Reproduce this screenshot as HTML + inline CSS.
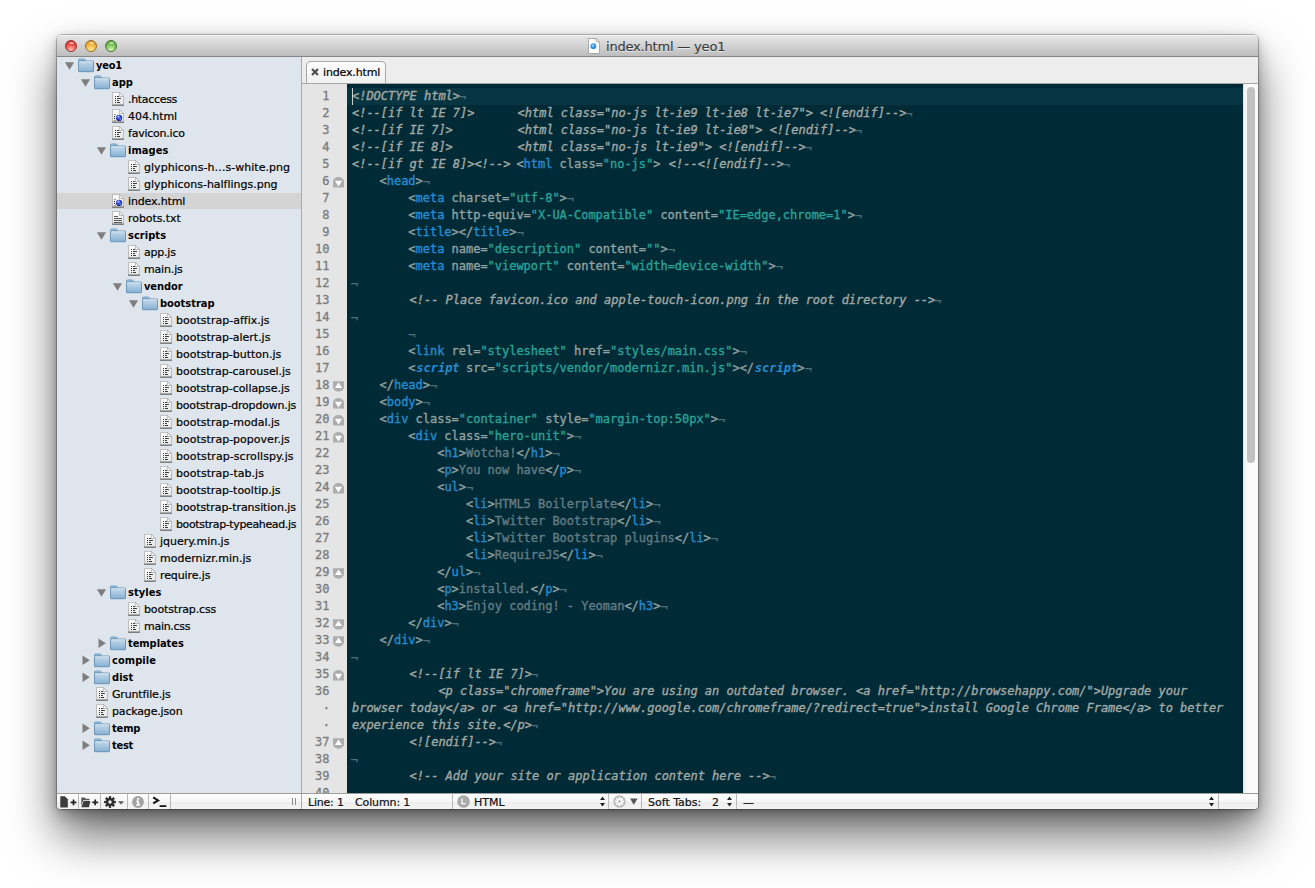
<!DOCTYPE html>
<html lang="en">
<head>
<meta charset="utf-8">
<title>index.html — yeo1</title>
<style>
html,body{margin:0;padding:0;background:#fff;}
body{width:1315px;height:888px;position:relative;overflow:hidden;font-family:"DejaVu Sans","Liberation Sans",sans-serif;font-size:11px;color:#000;}
.win{position:absolute;left:57px;top:35px;width:1201px;height:774px;border-radius:5px 5px 4px 4px;background:#ededed;
  box-shadow:0 0 0 1px rgba(0,0,0,.22),0 1px 4px rgba(0,0,0,.18),0 6px 16px rgba(0,0,0,.25),0 27px 48px rgba(0,0,0,.57);}
.clip{position:absolute;left:0;top:0;width:1201px;height:774px;border-radius:4px;overflow:hidden;}
.abs{position:absolute;}
/* title bar */
.title{position:absolute;left:0;top:0;width:1201px;height:22px;background:linear-gradient(#e9e9e9,#dcdcdc 30%,#bdbdbd 100%);border-bottom:1px solid #868686;box-shadow:inset 0 2px 0 -0px #f4f4f4;}
.tl{position:absolute;top:6px;width:12px;height:12px;border-radius:50%;box-sizing:border-box;}
.tl.r{left:8px;background:radial-gradient(circle at 50% 90%,#ffc8c0 0,#f4544c 50%,#d0302c 85%);border:1px solid #9a2f2c;}
.tl.y{left:28px;background:radial-gradient(circle at 50% 90%,#fff0a0 0,#f5b843 50%,#d9922a 85%);border:1px solid #a06c22;}
.tl.g{left:48px;background:radial-gradient(circle at 50% 90%,#e0f6c0 0,#80c65a 50%,#559a3a 85%);border:1px solid #487a34;}
.tl:after{content:"";position:absolute;left:2.5px;top:0.6px;width:5px;height:2.2px;border-radius:50%;background:rgba(255,255,255,.55);}
.ttext{-webkit-text-stroke:0.15px;position:absolute;left:549px;top:4px;letter-spacing:-0.19px;font-size:13px;line-height:17px;color:#3a3a3a;white-space:pre;text-shadow:0 1px 0 rgba(255,255,255,.6);}
/* sidebar */
.side{position:absolute;left:0;top:23px;width:244px;height:736px;background:#dfe5ec;overflow:hidden;}
.sdiv{position:absolute;left:244px;top:23px;width:1px;height:752px;background:#a9a9a9;}
.row{position:absolute;left:0;width:244px;height:17px;}
.row.sel{background:#d4d4d4;height:16px;}
.row .nm{position:absolute;top:0;line-height:17px;white-space:pre;font-size:11px;color:#000;-webkit-text-stroke:0.2px;}
.row .nm.b{font-weight:bold;-webkit-text-stroke:0;font-family:"DejaVu Sans Condensed","DejaVu Sans","Liberation Sans",sans-serif;}
.row svg{position:absolute;}
.tri path{fill:#7e7e7e;}
/* tab bar */
.tabbar{position:absolute;left:245px;top:23px;width:956px;height:26px;background:#ededed;border-bottom:1px solid #a6a6a6;}
.tab{position:absolute;left:4px;top:4px;width:80px;height:22px;box-sizing:border-box;border:1px solid #a8a8a8;border-bottom:none;border-radius:5px 5px 0 0;background:linear-gradient(#fdfdfd,#f1f1f1);}
.tab .x{position:absolute;left:4px;top:5.5px;}
.tab .tt{-webkit-text-stroke:0.2px;position:absolute;left:16px;top:2px;line-height:17px;font-size:11px;white-space:pre;letter-spacing:-0.15px;}
/* editor */
.gutter{position:absolute;left:245px;top:50px;width:45px;height:709px;background:#e5e5e5;overflow:hidden;}
.ln{position:absolute;right:17.5px;height:17px;line-height:17px;font-family:"DejaVu Sans Mono","Liberation Mono",monospace;font-size:12px;color:#7c7c7c;-webkit-text-stroke:0.3px;text-align:right;white-space:pre;}
.ln.dot{right:17px;}
.fold{position:absolute;left:31px;}
.ed{position:absolute;left:290px;top:50px;width:896px;height:709px;background:#002b36;overflow:hidden;}
.cur{position:absolute;left:0;top:4px;width:896px;height:17px;background:#073642;}
.caret{position:absolute;left:5px;top:4px;width:1px;height:17px;background:#c8d0d0;}
.cl{position:absolute;left:3.75px;height:17px;line-height:17px;white-space:pre;font-family:"DejaVu Sans Mono","Liberation Mono",monospace;font-size:12px;letter-spacing:-0.024px;color:#93a1a1;-webkit-text-stroke:0.35px;}
.c{font-style:italic;color:#a3a9a6;position:relative;left:1.25px;}
.p{color:#93a1a1;}
.t{color:#268bd2;}
.ti{color:#268bd2;font-style:italic;font-weight:bold;-webkit-text-stroke:0;position:relative;left:0.8px;}
.a{color:#93a1a1;}
.s{color:#2aa198;}
.x{color:#657b83;}
.i{color:#4a707c;position:relative;top:1px;}
/* scrollbar */
.sb{position:absolute;left:1186px;top:50px;width:15px;height:709px;background:linear-gradient(90deg,#f0f0f0,#fbfbfb 40%,#fafafa);box-shadow:inset 1px 0 0 #e4e4e4;}
.thumb{position:absolute;left:4px;top:3px;width:8px;height:376px;border-radius:4px;background:#c1c1c1;}
/* status */
.status{position:absolute;left:0;top:759px;width:1201px;height:16px;background:linear-gradient(#ffffff,#f6f6f6 50%,#ececec 51%,#f4f4f4);border-top:1px solid #9d9d9d;box-sizing:border-box;}
.sep{position:absolute;top:0;width:1px;height:15px;background:#b9b9b9;}
.st{-webkit-text-stroke:0.2px;position:absolute;top:0px;line-height:17px;font-size:11px;white-space:pre;color:#111;}
.status svg{position:absolute;}
</style>
</head>
<body>
<svg width="0" height="0" style="position:absolute">
  <defs>
    <linearGradient id="fg" x1="0" y1="0" x2="0" y2="1"><stop offset="0" stop-color="#c6dbeb"/><stop offset="1" stop-color="#86b0d2"/></linearGradient>
    <linearGradient id="pg" x1="0" y1="0" x2="0" y2="1"><stop offset="0" stop-color="#ffffff"/><stop offset="1" stop-color="#e6e6e6"/></linearGradient>
    <radialGradient id="gl" cx="0.4" cy="0.35" r="0.7"><stop offset="0" stop-color="#7f9cff"/><stop offset="0.5" stop-color="#2a3fd0"/><stop offset="1" stop-color="#101a80"/></radialGradient>
    <symbol id="folder" viewBox="0 0 16 15">
      <path d="M0.5 2 Q0.5 0.9 1.6 0.9 L6 0.9 Q6.9 0.9 7.2 1.9 L7.5 3 L0.5 3 Z" fill="#9dc0dc" stroke="#6f9cbd" stroke-width="0.8"/>
      <rect x="0.5" y="3" width="15" height="10.7" rx="0.6" fill="url(#fg)" stroke="#6290b4" stroke-width="0.9"/>
      <path d="M1.2 3.8 H14.8" stroke="#e3eef6" stroke-width="0.8"/>
    </symbol>
    <symbol id="page" viewBox="0 0 12 15">
      <path d="M0.5 0.4 L7.4 0.4 L11.5 4.5 L11.5 13 L0.5 13 Z" fill="url(#pg)" stroke="#b0b0b0" stroke-width="0.8"/>
      <path d="M0.1 13.2 H11.9" stroke="#5a5a5a" stroke-width="1"/>
      <path d="M7.4 0.4 L7.4 4.5 L11.5 4.5 Z" fill="#f6f6f6" stroke="#a4a4a4" stroke-width="0.7"/>
    </symbol>
    <symbol id="file" viewBox="0 0 12 15">
      <use href="#page"/>
      <g fill="#3c3c3c">
        <rect x="3" y="4" width="1" height="1"/><rect x="5" y="4" width="2" height="1"/>
        <rect x="3" y="6" width="1" height="1"/><rect x="5" y="6" width="4" height="1"/>
        <rect x="3" y="8" width="1" height="1"/><rect x="5" y="8" width="2" height="1"/>
        <rect x="3" y="10" width="1" height="1"/><rect x="5" y="10" width="3" height="1"/>
      </g>
    </symbol>
    <symbol id="tfile" viewBox="0 0 12 15">
      <use href="#page"/>
      <g fill="#5a5a5a">
        <rect x="2" y="5" width="4" height="1"/>
        <rect x="2" y="7" width="8" height="1"/>
        <rect x="2" y="9" width="8" height="1"/>
        <rect x="2" y="11" width="8" height="1"/>
      </g>
    </symbol>
    <symbol id="hfile" viewBox="0 0 12 15">
      <use href="#page"/>
      <rect x="2" y="5" width="2" height="1" fill="#999"/><rect x="2" y="11" width="2" height="1" fill="#999"/>
      <rect x="2" y="7" width="1" height="1" fill="#222"/><rect x="2" y="9" width="1" height="1" fill="#222"/>
      <circle cx="7.1" cy="8.9" r="3.1" fill="url(#gl)"/>
      <path d="M5.6 7.4 q1 -1 2 -0.2 q-0.4 1.1 -1.6 1.3 Z M7.6 9.6 q1 -0.6 1.6 0.2 q-0.6 1 -1.4 0.8 Z" fill="#c4d0ff" opacity=".9"/>
    </symbol>
    <symbol id="foldd" viewBox="0 0 11 11">
      <path d="M0 5.2 C0 -1.6 11 -1.6 11 5.2 L11 10.6 L0 10.6 Z" fill="#adadad"/>
      <path d="M1.9 3.8 L9.1 3.8 L5.5 9.4 Z" fill="#fff"/>
    </symbol>
    <symbol id="foldu" viewBox="0 0 11 11">
      <path d="M0 0.2 L11 0.2 L11 5.6 C11 12.4 0 12.4 0 5.6 Z" fill="#adadad"/>
      <path d="M1.9 7 L9.1 7 L5.5 1.4 Z" fill="#fff"/>
    </symbol>
  </defs>
</svg>

<div class="win">
 <div class="clip">
 <div class="inner" style="position:absolute;left:0;top:-1px;width:1201px;height:775px">
  <div class="title">
    <div class="tl r"></div><div class="tl y"></div><div class="tl g"></div>
    <svg class="abs" style="left:531px;top:4px" width="12" height="16" viewBox="0 0 12 16">
      <path d="M0.5 0.5 L8 0.5 L11.5 4 L11.5 15.5 L0.5 15.5 Z" fill="#fdfdfd" stroke="#9a9a9a" stroke-width="0.8"/>
      <path d="M8 0.5 L8 4 L11.5 4 Z" fill="#e9e9e9" stroke="#9a9a9a" stroke-width="0.6"/>
      <circle cx="5.4" cy="8.2" r="2.9" fill="#2f8fe0"/><circle cx="5" cy="7.6" r="1.3" fill="#8fd0ff"/>
    </svg>
    <div class="ttext">index.html — yeo1</div>
  </div>

  <div class="side">
<div class="row" style="top:0px"><svg class="tri" style="left:7px;top:5px" width="11" height="8" viewBox="0 0 11 8"><path d="M0.9 0.2 L10.1 0.2 L5.5 7.8 Z"/></svg><svg class="ico" style="left:21px;top:1px" width="16" height="15" viewBox="0 0 16 15"><use href="#folder"/></svg><span class="nm b" style="left:39px;letter-spacing:-0.201px">yeo1</span></div>
<div class="row" style="top:17px"><svg class="tri" style="left:23px;top:5px" width="11" height="8" viewBox="0 0 11 8"><path d="M0.9 0.2 L10.1 0.2 L5.5 7.8 Z"/></svg><svg class="ico" style="left:37px;top:1px" width="16" height="15" viewBox="0 0 16 15"><use href="#folder"/></svg><span class="nm b" style="left:55px;letter-spacing:0.000px">app</span></div>
<div class="row" style="top:34px"><svg class="ico" style="left:55px;top:1px" width="12" height="15" viewBox="0 0 12 15"><use href="#file"/></svg><span class="nm" style="left:71px;letter-spacing:-0.312px">.htaccess</span></div>
<div class="row" style="top:51px"><svg class="ico" style="left:55px;top:1px" width="12" height="15" viewBox="0 0 12 15"><use href="#hfile"/></svg><span class="nm" style="left:71px;letter-spacing:-0.056px">404.html</span></div>
<div class="row" style="top:68px"><svg class="ico" style="left:55px;top:1px" width="12" height="15" viewBox="0 0 12 15"><use href="#file"/></svg><span class="nm" style="left:71px;letter-spacing:-0.230px">favicon.ico</span></div>
<div class="row" style="top:85px"><svg class="tri" style="left:39px;top:5px" width="11" height="8" viewBox="0 0 11 8"><path d="M0.9 0.2 L10.1 0.2 L5.5 7.8 Z"/></svg><svg class="ico" style="left:53px;top:1px" width="16" height="15" viewBox="0 0 16 15"><use href="#folder"/></svg><span class="nm b" style="left:71px;letter-spacing:0.060px">images</span></div>
<div class="row" style="top:102px"><svg class="ico" style="left:71px;top:1px" width="12" height="15" viewBox="0 0 12 15"><use href="#file"/></svg><span class="nm" style="left:87px;letter-spacing:0.036px">glyphicons-h…s-white.png</span></div>
<div class="row" style="top:119px"><svg class="ico" style="left:71px;top:1px" width="12" height="15" viewBox="0 0 12 15"><use href="#file"/></svg><span class="nm" style="left:87px;letter-spacing:-0.012px">glyphicons-halflings.png</span></div>
<div class="row sel" style="top:136px"><svg class="ico" style="left:55px;top:1px" width="12" height="15" viewBox="0 0 12 15"><use href="#hfile"/></svg><span class="nm" style="left:71px;letter-spacing:-0.144px">index.html</span></div>
<div class="row" style="top:153px"><svg class="ico" style="left:55px;top:1px" width="12" height="15" viewBox="0 0 12 15"><use href="#tfile"/></svg><span class="nm" style="left:71px;letter-spacing:-0.066px">robots.txt</span></div>
<div class="row" style="top:170px"><svg class="tri" style="left:39px;top:5px" width="11" height="8" viewBox="0 0 11 8"><path d="M0.9 0.2 L10.1 0.2 L5.5 7.8 Z"/></svg><svg class="ico" style="left:53px;top:1px" width="16" height="15" viewBox="0 0 16 15"><use href="#folder"/></svg><span class="nm b" style="left:71px;letter-spacing:0.050px">scripts</span></div>
<div class="row" style="top:187px"><svg class="ico" style="left:71px;top:1px" width="12" height="15" viewBox="0 0 12 15"><use href="#file"/></svg><span class="nm" style="left:87px;letter-spacing:-0.220px">app.js</span></div>
<div class="row" style="top:204px"><svg class="ico" style="left:71px;top:1px" width="12" height="15" viewBox="0 0 12 15"><use href="#file"/></svg><span class="nm" style="left:87px;letter-spacing:-0.167px">main.js</span></div>
<div class="row" style="top:221px"><svg class="tri" style="left:55px;top:5px" width="11" height="8" viewBox="0 0 11 8"><path d="M0.9 0.2 L10.1 0.2 L5.5 7.8 Z"/></svg><svg class="ico" style="left:69px;top:1px" width="16" height="15" viewBox="0 0 16 15"><use href="#folder"/></svg><span class="nm b" style="left:87px;letter-spacing:-0.080px">vendor</span></div>
<div class="row" style="top:238px"><svg class="tri" style="left:71px;top:5px" width="11" height="8" viewBox="0 0 11 8"><path d="M0.9 0.2 L10.1 0.2 L5.5 7.8 Z"/></svg><svg class="ico" style="left:85px;top:1px" width="16" height="15" viewBox="0 0 16 15"><use href="#folder"/></svg><span class="nm b" style="left:103px;letter-spacing:-0.025px">bootstrap</span></div>
<div class="row" style="top:255px"><svg class="ico" style="left:103px;top:1px" width="12" height="15" viewBox="0 0 12 15"><use href="#file"/></svg><span class="nm" style="left:119px;letter-spacing:0.013px">bootstrap-affix.js</span></div>
<div class="row" style="top:272px"><svg class="ico" style="left:103px;top:1px" width="12" height="15" viewBox="0 0 12 15"><use href="#file"/></svg><span class="nm" style="left:119px;letter-spacing:-0.018px">bootstrap-alert.js</span></div>
<div class="row" style="top:289px"><svg class="ico" style="left:103px;top:1px" width="12" height="15" viewBox="0 0 12 15"><use href="#file"/></svg><span class="nm" style="left:119px;letter-spacing:-0.022px">bootstrap-button.js</span></div>
<div class="row" style="top:306px"><svg class="ico" style="left:103px;top:1px" width="12" height="15" viewBox="0 0 12 15"><use href="#file"/></svg><span class="nm" style="left:119px;letter-spacing:-0.040px">bootstrap-carousel.js</span></div>
<div class="row" style="top:323px"><svg class="ico" style="left:103px;top:1px" width="12" height="15" viewBox="0 0 12 15"><use href="#file"/></svg><span class="nm" style="left:119px;letter-spacing:-0.035px">bootstrap-collapse.js</span></div>
<div class="row" style="top:340px"><svg class="ico" style="left:103px;top:1px" width="12" height="15" viewBox="0 0 12 15"><use href="#file"/></svg><span class="nm" style="left:119px;letter-spacing:-0.185px">bootstrap-dropdown.js</span></div>
<div class="row" style="top:357px"><svg class="ico" style="left:103px;top:1px" width="12" height="15" viewBox="0 0 12 15"><use href="#file"/></svg><span class="nm" style="left:119px;letter-spacing:0.018px">bootstrap-modal.js</span></div>
<div class="row" style="top:374px"><svg class="ico" style="left:103px;top:1px" width="12" height="15" viewBox="0 0 12 15"><use href="#file"/></svg><span class="nm" style="left:119px;letter-spacing:0.010px">bootstrap-popover.js</span></div>
<div class="row" style="top:391px"><svg class="ico" style="left:103px;top:1px" width="12" height="15" viewBox="0 0 12 15"><use href="#file"/></svg><span class="nm" style="left:119px;letter-spacing:0.080px">bootstrap-scrollspy.js</span></div>
<div class="row" style="top:408px"><svg class="ico" style="left:103px;top:1px" width="12" height="15" viewBox="0 0 12 15"><use href="#file"/></svg><span class="nm" style="left:119px;letter-spacing:0.039px">bootstrap-tab.js</span></div>
<div class="row" style="top:425px"><svg class="ico" style="left:103px;top:1px" width="12" height="15" viewBox="0 0 12 15"><use href="#file"/></svg><span class="nm" style="left:119px;letter-spacing:0.005px">bootstrap-tooltip.js</span></div>
<div class="row" style="top:442px"><svg class="ico" style="left:103px;top:1px" width="12" height="15" viewBox="0 0 12 15"><use href="#file"/></svg><span class="nm" style="left:119px;letter-spacing:-0.077px">bootstrap-transition.js</span></div>
<div class="row" style="top:459px"><svg class="ico" style="left:103px;top:1px" width="12" height="15" viewBox="0 0 12 15"><use href="#file"/></svg><span class="nm" style="left:119px;letter-spacing:-0.367px">bootstrap-typeahead.js</span></div>
<div class="row" style="top:476px"><svg class="ico" style="left:87px;top:1px" width="12" height="15" viewBox="0 0 12 15"><use href="#file"/></svg><span class="nm" style="left:103px;letter-spacing:-0.033px">jquery.min.js</span></div>
<div class="row" style="top:493px"><svg class="ico" style="left:87px;top:1px" width="12" height="15" viewBox="0 0 12 15"><use href="#file"/></svg><span class="nm" style="left:103px;letter-spacing:-0.014px">modernizr.min.js</span></div>
<div class="row" style="top:510px"><svg class="ico" style="left:87px;top:1px" width="12" height="15" viewBox="0 0 12 15"><use href="#file"/></svg><span class="nm" style="left:103px;letter-spacing:-0.111px">require.js</span></div>
<div class="row" style="top:527px"><svg class="tri" style="left:39px;top:5px" width="11" height="8" viewBox="0 0 11 8"><path d="M0.9 0.2 L10.1 0.2 L5.5 7.8 Z"/></svg><svg class="ico" style="left:53px;top:1px" width="16" height="15" viewBox="0 0 16 15"><use href="#folder"/></svg><span class="nm b" style="left:71px;letter-spacing:0.080px">styles</span></div>
<div class="row" style="top:544px"><svg class="ico" style="left:71px;top:1px" width="12" height="15" viewBox="0 0 12 15"><use href="#file"/></svg><span class="nm" style="left:87px;letter-spacing:-0.151px">bootstrap.css</span></div>
<div class="row" style="top:561px"><svg class="ico" style="left:71px;top:1px" width="12" height="15" viewBox="0 0 12 15"><use href="#file"/></svg><span class="nm" style="left:87px;letter-spacing:-0.286px">main.css</span></div>
<div class="row" style="top:578px"><svg class="tri" style="left:41px;top:3px" width="9" height="11" viewBox="0 0 9 11"><path d="M0.5 0.6 L0.5 10 L7.8 5.3 Z"/></svg><svg class="ico" style="left:53px;top:1px" width="16" height="15" viewBox="0 0 16 15"><use href="#folder"/></svg><span class="nm b" style="left:71px;letter-spacing:-0.050px">templates</span></div>
<div class="row" style="top:595px"><svg class="tri" style="left:25px;top:3px" width="9" height="11" viewBox="0 0 9 11"><path d="M0.5 0.6 L0.5 10 L7.8 5.3 Z"/></svg><svg class="ico" style="left:37px;top:1px" width="16" height="15" viewBox="0 0 16 15"><use href="#folder"/></svg><span class="nm b" style="left:55px;letter-spacing:0.067px">compile</span></div>
<div class="row" style="top:612px"><svg class="tri" style="left:25px;top:3px" width="9" height="11" viewBox="0 0 9 11"><path d="M0.5 0.6 L0.5 10 L7.8 5.3 Z"/></svg><svg class="ico" style="left:37px;top:1px" width="16" height="15" viewBox="0 0 16 15"><use href="#folder"/></svg><span class="nm b" style="left:55px;letter-spacing:0.066px">dist</span></div>
<div class="row" style="top:629px"><svg class="ico" style="left:39px;top:1px" width="12" height="15" viewBox="0 0 12 15"><use href="#file"/></svg><span class="nm" style="left:55px;letter-spacing:-0.155px">Gruntfile.js</span></div>
<div class="row" style="top:646px"><svg class="ico" style="left:39px;top:1px" width="12" height="15" viewBox="0 0 12 15"><use href="#file"/></svg><span class="nm" style="left:55px;letter-spacing:-0.164px">package.json</span></div>
<div class="row" style="top:663px"><svg class="tri" style="left:25px;top:3px" width="9" height="11" viewBox="0 0 9 11"><path d="M0.5 0.6 L0.5 10 L7.8 5.3 Z"/></svg><svg class="ico" style="left:37px;top:1px" width="16" height="15" viewBox="0 0 16 15"><use href="#folder"/></svg><span class="nm b" style="left:55px;letter-spacing:-0.133px">temp</span></div>
<div class="row" style="top:680px"><svg class="tri" style="left:25px;top:3px" width="9" height="11" viewBox="0 0 9 11"><path d="M0.5 0.6 L0.5 10 L7.8 5.3 Z"/></svg><svg class="ico" style="left:37px;top:1px" width="16" height="15" viewBox="0 0 16 15"><use href="#folder"/></svg><span class="nm b" style="left:55px;letter-spacing:-0.267px">test</span></div>
  </div>
  <div class="sdiv"></div>

  <div class="tabbar">
    <div class="tab">
      <svg class="x" width="8" height="8" viewBox="0 0 8 8"><path d="M1 1 L7 7 M7 1 L1 7" stroke="#4a4a4a" stroke-width="2.1"/></svg>
      <div class="tt">index.html</div>
    </div>
  </div>

  <div class="gutter">
<div class="ln" style="top:4px">1</div>
<div class="ln" style="top:21px">2</div>
<div class="ln" style="top:38px">3</div>
<div class="ln" style="top:55px">4</div>
<div class="ln" style="top:72px">5</div>
<div class="ln" style="top:89px">6</div>
<svg class="fold" style="top:93px" width="11" height="11" viewBox="0 0 11 11"><use href="#foldd"/></svg>
<div class="ln" style="top:106px">7</div>
<div class="ln" style="top:123px">8</div>
<div class="ln" style="top:140px">9</div>
<div class="ln" style="top:157px">10</div>
<div class="ln" style="top:174px">11</div>
<div class="ln" style="top:191px">12</div>
<div class="ln" style="top:208px">13</div>
<div class="ln" style="top:225px">14</div>
<div class="ln" style="top:242px">15</div>
<div class="ln" style="top:259px">16</div>
<div class="ln" style="top:276px">17</div>
<div class="ln" style="top:293px">18</div>
<svg class="fold" style="top:297px" width="11" height="11" viewBox="0 0 11 11"><use href="#foldu"/></svg>
<div class="ln" style="top:310px">19</div>
<svg class="fold" style="top:314px" width="11" height="11" viewBox="0 0 11 11"><use href="#foldd"/></svg>
<div class="ln" style="top:327px">20</div>
<svg class="fold" style="top:331px" width="11" height="11" viewBox="0 0 11 11"><use href="#foldd"/></svg>
<div class="ln" style="top:344px">21</div>
<svg class="fold" style="top:348px" width="11" height="11" viewBox="0 0 11 11"><use href="#foldd"/></svg>
<div class="ln" style="top:361px">22</div>
<div class="ln" style="top:378px">23</div>
<div class="ln" style="top:395px">24</div>
<svg class="fold" style="top:399px" width="11" height="11" viewBox="0 0 11 11"><use href="#foldd"/></svg>
<div class="ln" style="top:412px">25</div>
<div class="ln" style="top:429px">26</div>
<div class="ln" style="top:446px">27</div>
<div class="ln" style="top:463px">28</div>
<div class="ln" style="top:480px">29</div>
<svg class="fold" style="top:484px" width="11" height="11" viewBox="0 0 11 11"><use href="#foldu"/></svg>
<div class="ln" style="top:497px">30</div>
<div class="ln" style="top:514px">31</div>
<div class="ln" style="top:531px">32</div>
<svg class="fold" style="top:535px" width="11" height="11" viewBox="0 0 11 11"><use href="#foldu"/></svg>
<div class="ln" style="top:548px">33</div>
<svg class="fold" style="top:552px" width="11" height="11" viewBox="0 0 11 11"><use href="#foldu"/></svg>
<div class="ln" style="top:565px">34</div>
<div class="ln" style="top:582px">35</div>
<svg class="fold" style="top:586px" width="11" height="11" viewBox="0 0 11 11"><use href="#foldd"/></svg>
<div class="ln" style="top:599px">36</div>
<div class="ln dot" style="top:616px">·</div>
<div class="ln dot" style="top:633px">·</div>
<div class="ln" style="top:650px">37</div>
<svg class="fold" style="top:654px" width="11" height="11" viewBox="0 0 11 11"><use href="#foldu"/></svg>
<div class="ln" style="top:667px">38</div>
<div class="ln" style="top:684px">39</div>
<div class="ln" style="top:701px">40</div>
  </div>
  <div class="ed">
    <div class="cur"></div>
<div class="cl" style="top:4px"><span class="c">&lt;!DOCTYPE html&gt;</span><span class="i">¬</span></div>
<div class="cl" style="top:21px"><span class="c">&lt;!--[if lt IE 7]&gt;      &lt;html class=&quot;no-js lt-ie9 lt-ie8 lt-ie7&quot;&gt; &lt;![endif]--&gt;</span><span class="i">¬</span></div>
<div class="cl" style="top:38px"><span class="c">&lt;!--[if IE 7]&gt;         &lt;html class=&quot;no-js lt-ie9 lt-ie8&quot;&gt; &lt;![endif]--&gt;</span><span class="i">¬</span></div>
<div class="cl" style="top:55px"><span class="c">&lt;!--[if IE 8]&gt;         &lt;html class=&quot;no-js lt-ie9&quot;&gt; &lt;![endif]--&gt;</span><span class="i">¬</span></div>
<div class="cl" style="top:72px"><span class="c">&lt;!--[if gt IE 8]&gt;&lt;!--&gt;</span><span class="x"> </span><span class="p">&lt;</span><span class="t">html</span><span class="a"> class=</span><span class="s">&quot;no-js&quot;</span><span class="p">&gt;</span><span class="x"> </span><span class="c">&lt;!--&lt;![endif]--&gt;</span><span class="i">¬</span></div>
<div class="cl" style="top:89px">    <span class="p">&lt;</span><span class="t">head</span><span class="p">&gt;</span><span class="i">¬</span></div>
<div class="cl" style="top:106px">        <span class="p">&lt;</span><span class="t">meta</span><span class="a"> charset=</span><span class="s">&quot;utf-8&quot;</span><span class="p">&gt;</span><span class="i">¬</span></div>
<div class="cl" style="top:123px">        <span class="p">&lt;</span><span class="t">meta</span><span class="a"> http-equiv=</span><span class="s">&quot;X-UA-Compatible&quot;</span><span class="a"> content=</span><span class="s">&quot;IE=edge,chrome=1&quot;</span><span class="p">&gt;</span><span class="i">¬</span></div>
<div class="cl" style="top:140px">        <span class="p">&lt;</span><span class="t">title</span><span class="p">&gt;</span><span class="p">&lt;/</span><span class="t">title</span><span class="p">&gt;</span><span class="i">¬</span></div>
<div class="cl" style="top:157px">        <span class="p">&lt;</span><span class="t">meta</span><span class="a"> name=</span><span class="s">&quot;description&quot;</span><span class="a"> content=</span><span class="s">&quot;&quot;</span><span class="p">&gt;</span><span class="i">¬</span></div>
<div class="cl" style="top:174px">        <span class="p">&lt;</span><span class="t">meta</span><span class="a"> name=</span><span class="s">&quot;viewport&quot;</span><span class="a"> content=</span><span class="s">&quot;width=device-width&quot;</span><span class="p">&gt;</span><span class="i">¬</span></div>
<div class="cl" style="top:191px"><span class="i">¬</span></div>
<div class="cl" style="top:208px">        <span class="c">&lt;!-- Place favicon.ico and apple-touch-icon.png in the root directory --&gt;</span><span class="i">¬</span></div>
<div class="cl" style="top:225px"><span class="i">¬</span></div>
<div class="cl" style="top:242px">        <span class="i">¬</span></div>
<div class="cl" style="top:259px">        <span class="p">&lt;</span><span class="t">link</span><span class="a"> rel=</span><span class="s">&quot;stylesheet&quot;</span><span class="a"> href=</span><span class="s">&quot;styles/main.css&quot;</span><span class="p">&gt;</span><span class="i">¬</span></div>
<div class="cl" style="top:276px">        <span class="p">&lt;</span><span class="ti">script</span><span class="a"> src=</span><span class="s">&quot;scripts/vendor/modernizr.min.js&quot;</span><span class="p">&gt;</span><span class="p">&lt;/</span><span class="ti">script</span><span class="p">&gt;</span><span class="i">¬</span></div>
<div class="cl" style="top:293px">    <span class="p">&lt;/</span><span class="t">head</span><span class="p">&gt;</span><span class="i">¬</span></div>
<div class="cl" style="top:310px">    <span class="p">&lt;</span><span class="t">body</span><span class="p">&gt;</span><span class="i">¬</span></div>
<div class="cl" style="top:327px">    <span class="p">&lt;</span><span class="t">div</span><span class="a"> class=</span><span class="s">&quot;container&quot;</span><span class="a"> style=</span><span class="s">&quot;margin-top:50px&quot;</span><span class="p">&gt;</span><span class="i">¬</span></div>
<div class="cl" style="top:344px">        <span class="p">&lt;</span><span class="t">div</span><span class="a"> class=</span><span class="s">&quot;hero-unit&quot;</span><span class="p">&gt;</span><span class="i">¬</span></div>
<div class="cl" style="top:361px">            <span class="p">&lt;</span><span class="t">h1</span><span class="p">&gt;</span><span class="x">Wotcha!</span><span class="p">&lt;/</span><span class="t">h1</span><span class="p">&gt;</span><span class="i">¬</span></div>
<div class="cl" style="top:378px">            <span class="p">&lt;</span><span class="t">p</span><span class="p">&gt;</span><span class="x">You now have</span><span class="p">&lt;/</span><span class="t">p</span><span class="p">&gt;</span><span class="i">¬</span></div>
<div class="cl" style="top:395px">            <span class="p">&lt;</span><span class="t">ul</span><span class="p">&gt;</span><span class="i">¬</span></div>
<div class="cl" style="top:412px">                <span class="p">&lt;</span><span class="t">li</span><span class="p">&gt;</span><span class="x">HTML5 Boilerplate</span><span class="p">&lt;/</span><span class="t">li</span><span class="p">&gt;</span><span class="i">¬</span></div>
<div class="cl" style="top:429px">                <span class="p">&lt;</span><span class="t">li</span><span class="p">&gt;</span><span class="x">Twitter Bootstrap</span><span class="p">&lt;/</span><span class="t">li</span><span class="p">&gt;</span><span class="i">¬</span></div>
<div class="cl" style="top:446px">                <span class="p">&lt;</span><span class="t">li</span><span class="p">&gt;</span><span class="x">Twitter Bootstrap plugins</span><span class="p">&lt;/</span><span class="t">li</span><span class="p">&gt;</span><span class="i">¬</span></div>
<div class="cl" style="top:463px">                <span class="p">&lt;</span><span class="t">li</span><span class="p">&gt;</span><span class="x">RequireJS</span><span class="p">&lt;/</span><span class="t">li</span><span class="p">&gt;</span><span class="i">¬</span></div>
<div class="cl" style="top:480px">            <span class="p">&lt;/</span><span class="t">ul</span><span class="p">&gt;</span><span class="i">¬</span></div>
<div class="cl" style="top:497px">            <span class="p">&lt;</span><span class="t">p</span><span class="p">&gt;</span><span class="x">installed.</span><span class="p">&lt;/</span><span class="t">p</span><span class="p">&gt;</span><span class="i">¬</span></div>
<div class="cl" style="top:514px">            <span class="p">&lt;</span><span class="t">h3</span><span class="p">&gt;</span><span class="x">Enjoy coding! - Yeoman</span><span class="p">&lt;/</span><span class="t">h3</span><span class="p">&gt;</span><span class="i">¬</span></div>
<div class="cl" style="top:531px">        <span class="p">&lt;/</span><span class="t">div</span><span class="p">&gt;</span><span class="i">¬</span></div>
<div class="cl" style="top:548px">    <span class="p">&lt;/</span><span class="t">div</span><span class="p">&gt;</span><span class="i">¬</span></div>
<div class="cl" style="top:565px"><span class="i">¬</span></div>
<div class="cl" style="top:582px">        <span class="c">&lt;!--[if lt IE 7]&gt;</span><span class="i">¬</span></div>
<div class="cl" style="top:599px">            <span class="c">&lt;p class=&quot;chromeframe&quot;&gt;You are using an outdated browser. &lt;a href=</span><span class="c">&quot;http:</span><span class="c">//browsehappy.com/&quot;&gt;Upgrade your</span></div>
<div class="cl" style="top:616px"><span class="c">browser today&lt;/a&gt; or &lt;a href=</span><span class="c">&quot;http:</span><span class="c">//www.google.com/chromeframe/?redirect=true&quot;&gt;install Google Chrome Frame&lt;/a&gt; to better</span></div>
<div class="cl" style="top:633px"><span class="c">experience this site.&lt;/p&gt;</span><span class="i">¬</span></div>
<div class="cl" style="top:650px">        <span class="c">&lt;![endif]--&gt;</span><span class="i">¬</span></div>
<div class="cl" style="top:667px"><span class="i">¬</span></div>
<div class="cl" style="top:684px">        <span class="c">&lt;!-- Add your site or application content here --&gt;</span><span class="i">¬</span></div>
<div class="cl" style="top:701px"></div>
    <div class="caret"></div>
  </div>
  <div class="sb"><div class="thumb"></div></div>

  <div class="status">
    <!-- left buttons -->
    <svg style="left:3px;top:2px" width="19" height="12" viewBox="0 0 19 12">
      <path d="M0.3 0.3 L4.8 0.3 L7.8 3.3 L7.8 11.4 L0.3 11.4 Z" fill="#3d3d3d"/>
      <path d="M10.6 6.3 H16.4 M13.5 3.4 V9.2" stroke="#222" stroke-width="1.7"/>
    </svg>
    <div class="sep" style="left:21px"></div>
    <svg style="left:24px;top:3px" width="19" height="11" viewBox="0 0 19 11">
      <path d="M0.3 0.6 L3.6 0.6 L4.6 1.8 L8.4 1.8 L8.4 3.2 L2.2 3.2 L0.3 9 Z" fill="#555"/>
      <path d="M2.6 3.9 L9.4 3.9 L7.9 10.3 L0.4 10.3 Z" fill="#3d3d3d"/>
      <path d="M11.3 5.3 H17.1 M14.2 2.4 V8.2" stroke="#222" stroke-width="1.7"/>
    </svg>
    <div class="sep" style="left:43px"></div>
    <svg style="left:47px;top:2px" width="21" height="12" viewBox="0 0 21 12">
      <g transform="translate(6,6)" fill="#2e2e2e">
        <circle r="4.1"/>
        <g id="tt"><rect x="-1.15" y="-5.9" width="2.3" height="11.8"/></g>
        <use href="#tt" transform="rotate(45)"/><use href="#tt" transform="rotate(90)"/><use href="#tt" transform="rotate(135)"/>
        <circle r="1.7" fill="#f4f4f4"/>
      </g>
      <path d="M14 5.2 L20 5.2 L17 8.6 Z" fill="#555"/>
    </svg>
    <div class="sep" style="left:70px"></div>
    <svg style="left:75px;top:1.5px" width="12" height="12" viewBox="0 0 12 12">
      <circle cx="6" cy="6" r="5.9" fill="#a2a2a2"/>
      <path d="M4.3 4.6 H7.1 V8.4 H8.2 V9.8 H4.1 V8.4 H5.2 V5.9 H4.3 Z M5.1 2 H7.1 V3.7 H5.1 Z" fill="#fff"/>
    </svg>
    <div class="sep" style="left:91px"></div>
    <svg style="left:95px;top:2px" width="16" height="12" viewBox="0 0 16 12">
      <path d="M1.2 1.4 L6.2 4.4 L1.2 7.4" fill="none" stroke="#111" stroke-width="1.9" stroke-linejoin="miter"/>
      <path d="M7.6 10.2 H14.4" stroke="#111" stroke-width="1.8"/>
    </svg>
    <div class="sep" style="left:113px"></div>
    <div class="abs" style="left:235px;top:4px;width:1px;height:7px;background:#8a8a8a"></div>
    <div class="abs" style="left:238px;top:4px;width:1px;height:7px;background:#8a8a8a"></div>
    <div class="sep" style="left:244px;background:#a9a9a9"></div>

    <div class="st" style="left:251px;letter-spacing:-0.2px">Line: 1</div>
    <div class="st" style="left:298px;letter-spacing:-0.12px">Column: 1</div>
    <div class="sep" style="left:395px"></div>
    <svg style="left:400px;top:1px" width="13" height="13" viewBox="0 0 13 13">
      <circle cx="6.5" cy="6.5" r="6.3" fill="#a9a9a9"/>
      <path d="M5 3.4 V8.6 H8.6" fill="none" stroke="#fff" stroke-width="1.3"/>
    </svg>
    <div class="st" style="left:417px">HTML</div>
    <svg style="left:543px;top:2px" width="5" height="11" viewBox="0 0 5 11"><path d="M0 4 L2.5 0.4 L5 4 Z M0 7 L2.5 10.6 L5 7 Z" fill="#222"/></svg>
    <div class="sep" style="left:551px"></div>
    <svg style="left:556px;top:1px" width="26" height="13" viewBox="0 0 26 13">
      <circle cx="6.5" cy="6.5" r="6.3" fill="#bdbdbd"/>
      <g transform="translate(6.5,6.5)" fill="#fff">
        <circle r="3"/>
        <g id="t2"><rect x="-0.8" y="-4.6" width="1.6" height="9.2"/></g>
        <use href="#t2" transform="rotate(45)"/><use href="#t2" transform="rotate(90)"/><use href="#t2" transform="rotate(135)"/>
        <circle r="1.5" fill="#bdbdbd"/>
      </g>
      <path d="M17 3.6 L24.6 3.6 L20.8 9.8 Z" fill="#555"/>
    </svg>
    <div class="sep" style="left:584px"></div>
    <div class="st" style="left:591px">Soft Tabs:</div>
    <div class="st" style="left:655px">2</div>
    <svg style="left:670px;top:2px" width="5" height="11" viewBox="0 0 5 11"><path d="M0 4 L2.5 0.4 L5 4 Z M0 7 L2.5 10.6 L5 7 Z" fill="#222"/></svg>
    <div class="sep" style="left:679px"></div>
    <div class="st" style="left:686px">—</div>
    <svg style="left:1152px;top:2px" width="5" height="11" viewBox="0 0 5 11"><path d="M0 4 L2.5 0.4 L5 4 Z M0 7 L2.5 10.6 L5 7 Z" fill="#222"/></svg>
    <div class="sep" style="left:1161px"></div>
  </div>
 </div>
 </div>
</div>
</body>
</html>
